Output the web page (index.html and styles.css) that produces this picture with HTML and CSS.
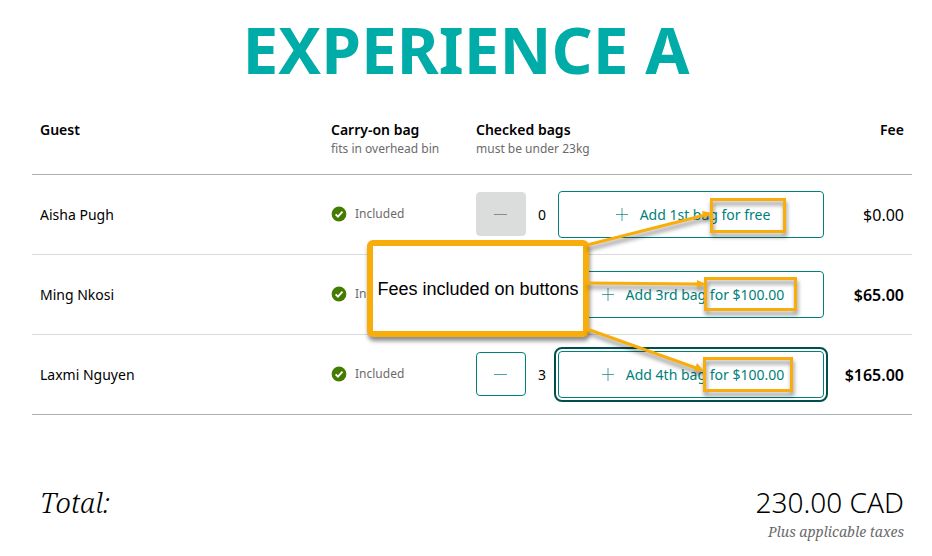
FILE: index.html
```
<!DOCTYPE html>
<html lang="en">
<head>
	<meta charset="UTF-8">
	<meta name="viewport" content="width=device-width, initial-scale=1.0">
	<title>Experience A</title>
	<link rel="stylesheet" href="styles.css">
</head>
<body>
	<svg class="defs" width="0" height="0" aria-hidden="true">
		<symbol id="check" viewBox="0 0 16 16">
			<circle cx="8" cy="8" r="7.4" fill="#437c00"/>
			<path d="M4.6 8.4l2.3 2.2 4.6-5" fill="none" stroke="#fff" stroke-width="1.8"/>
		</symbol>
		<symbol id="plus" viewBox="0 0 20 20">
			<path d="M4 9.5h12M10 3v13" fill="none" stroke="currentColor" stroke-opacity=".7"/>
		</symbol>
		<symbol id="minus" viewBox="0 0 20 20">
			<path d="M3 10.5h13" fill="none" stroke="currentColor" stroke-opacity=".7"/>
		</symbol>
	</svg>

	<h1>EXPERIENCE A</h1>
	<main class="main">
		<div class="bags">
			<table>
				<colgroup>
					<col>
					<col class="col-carry">
					<col class="col-checked">
					<col class="col-fee">
				</colgroup>
				<thead>
					<tr>
						<th scope="col">Guest</th>
						<th scope="col">Carry-on bag<small>fits in overhead bin</small></th>
						<th scope="col">Checked bags<small>must be under 23kg</small></th>
						<th scope="col" class="fee">Fee</th>
					</tr>
				</thead>
				<tbody>
					<tr>
						<td>Aisha Pugh</td>
						<td><div class="included"><svg width="16" height="16"><use href="#check"/></svg>Included</div></td>
						<td>
							<div class="stepper">
								<button class="remove" aria-label="Remove bag" disabled><svg width="20" height="20"><use href="#minus"/></svg></button>
								<span class="count">0</span>
								<button class="add"><svg width="20" height="20"><use href="#plus"/></svg>Add 1st bag for free</button>
							</div>
						</td>
						<td class="fee">$0.00</td>
					</tr>
					<tr>
						<td>Ming Nkosi</td>
						<td><div class="included"><svg width="16" height="16"><use href="#check"/></svg>Included</div></td>
						<td>
							<div class="stepper">
								<button class="remove" aria-label="Remove bag"><svg width="20" height="20"><use href="#minus"/></svg></button>
								<span class="count">2</span>
								<button class="add"><svg width="20" height="20"><use href="#plus"/></svg>Add 3rd bag for $100.00</button>
							</div>
						</td>
						<td class="fee due">$65.00</td>
					</tr>
					<tr>
						<td>Laxmi Nguyen</td>
						<td><div class="included"><svg width="16" height="16"><use href="#check"/></svg>Included</div></td>
						<td>
							<div class="stepper">
								<button class="remove" aria-label="Remove bag"><svg width="20" height="20"><use href="#minus"/></svg></button>
								<span class="count">3</span>
								<button class="add focused"><svg width="20" height="20"><use href="#plus"/></svg>Add 4th bag for $100.00</button>
							</div>
						</td>
						<td class="fee due">$165.00</td>
					</tr>
				</tbody>
			</table>

			<!-- callout, arrows and the frames round the fees -->
			<div class="callout">Fees included on buttons</div>
			<svg class="notes" width="560" height="303" viewBox="0 0 560 303" aria-hidden="true">
				<g fill="none" stroke="#f9ad0b" stroke-width="3">
					<path d="M235 133L353 103M235 171L345 172M235 217L344 256"/>
					<rect x="359.5" y="87.5" width="73" height="32"/>
					<rect x="353.5" y="166.5" width="90" height="31"/>
					<rect x="352.5" y="246.5" width="87" height="32"/>
				</g>
				<g fill="#f9ad0b">
					<path d="M360 101l-10-2 2 8zM354 172l-9-4v8zM352 259l-7-8-3 8z"/>
				</g>
			</svg>
		</div>

		<div class="total">
			<span class="label">Total:</span>
			<div class="amount">
				<strong>230.00 CAD</strong>
				<em>Plus applicable taxes</em>
			</div>
		</div>
	</main>
</body>
</html>
```

FILE: styles.css
```
*{
	margin: 0;
	padding: 0;
	box-sizing: border-box;
}
body{
	background: #fff;
	color: #000;
	font-family: "Noto Sans", sans-serif;
	font-size: 14px;
	line-height: 20px;
}
.defs{
	position: absolute;
}
h1{
	padding-top: 6px;
	color: #00aca8;
	font-size: 64px;
	line-height: 88px;
	text-align: center;
}
.main{
	padding: 18px 20px 12px 32px;
}
.bags{
	position: relative;
}
table{
	width: 100%;
	table-layout: fixed;
	border-spacing: 0;
}
.col-carry{
	width: 145px;
}
.col-checked{
	width: 364px;
}
.col-fee{
	width: 80px;
}
th{
	height: 63px;
	padding: 8px 8px 16px;
	border-bottom: 1px solid #a9afaf;
	font-weight: 600;
	text-align: left;
	vertical-align: top;
}
th small{
	display: block;
	color: #6b6b6b;
	font-size: 12px;
	line-height: 18px;
	font-weight: 400;
}
td{
	padding: 16px 8px;
	border-bottom: 1px solid #d8dbdb;
	vertical-align: middle;
}
tbody tr:last-child td{
	border-color: #a9afaf;
}
.fee{
	text-align: right;
	white-space: nowrap;
}
td.fee{
	padding-left: 0;
	font-size: 16px;
}
.due{
	font-weight: 600;
}
.included{
	display: flex;
	align-items: center;
	gap: 8px;
	padding-bottom: 2px;
	color: #6b6b6b;
	font-size: 12px;
}
.stepper{
	display: flex;
	align-items: center;
}
button{
	display: flex;
	align-items: center;
	justify-content: center;
	gap: 8px;
	background: #fff;
	border: 1px solid #007f7b;
	border-radius: 4px;
	color: #007f7b;
	font: inherit;
	cursor: pointer;
}
.remove{
	width: 50px;
	height: 44px;
	margin-bottom: 2px;
}
.remove:disabled{
	background: #dadddc;
	border-color: #dadddc;
	color: #666;
	cursor: default;
}
.count{
	width: 32px;
	text-align: center;
}
.add{
	flex: 1;
	height: 47px;
}
.focused{
	outline: 2px solid #004f4b;
	outline-offset: 2px;
}
.callout{
	position: absolute;
	top: 128px;
	right: 323px;
	width: 222px;
	height: 97px;
	display: flex;
	align-items: center;
	justify-content: center;
	background: #fff;
	border: 6px solid #f9ad0b;
	border-radius: 6px;
	box-shadow: 1px 4px 4px rgba(0,0,0,.45);
	font-family: "Liberation Sans", sans-serif;
	font-size: 18px;
	white-space: nowrap;
}
.notes{
	position: absolute;
	top: 0;
	right: 0;
	overflow: visible;
	pointer-events: none;
	filter: drop-shadow(1px 4px 2px rgba(0,0,0,.45));
}
.total{
	display: flex;
	justify-content: space-between;
	margin-top: 67px;
	padding: 0 8px;
}
.label,.amount strong{
	font-size: 28px;
	line-height: 40px;
}
.label,em{
	font-family: "Noto Serif", "Liberation Serif", serif;
	font-style: italic;
}
.label,.amount strong{
	font-weight: 300;
}
.amount{
	display: flex;
	flex-flow: column;
	align-items: flex-end;
}
em{
	color: #6b6b6b;
}
```
